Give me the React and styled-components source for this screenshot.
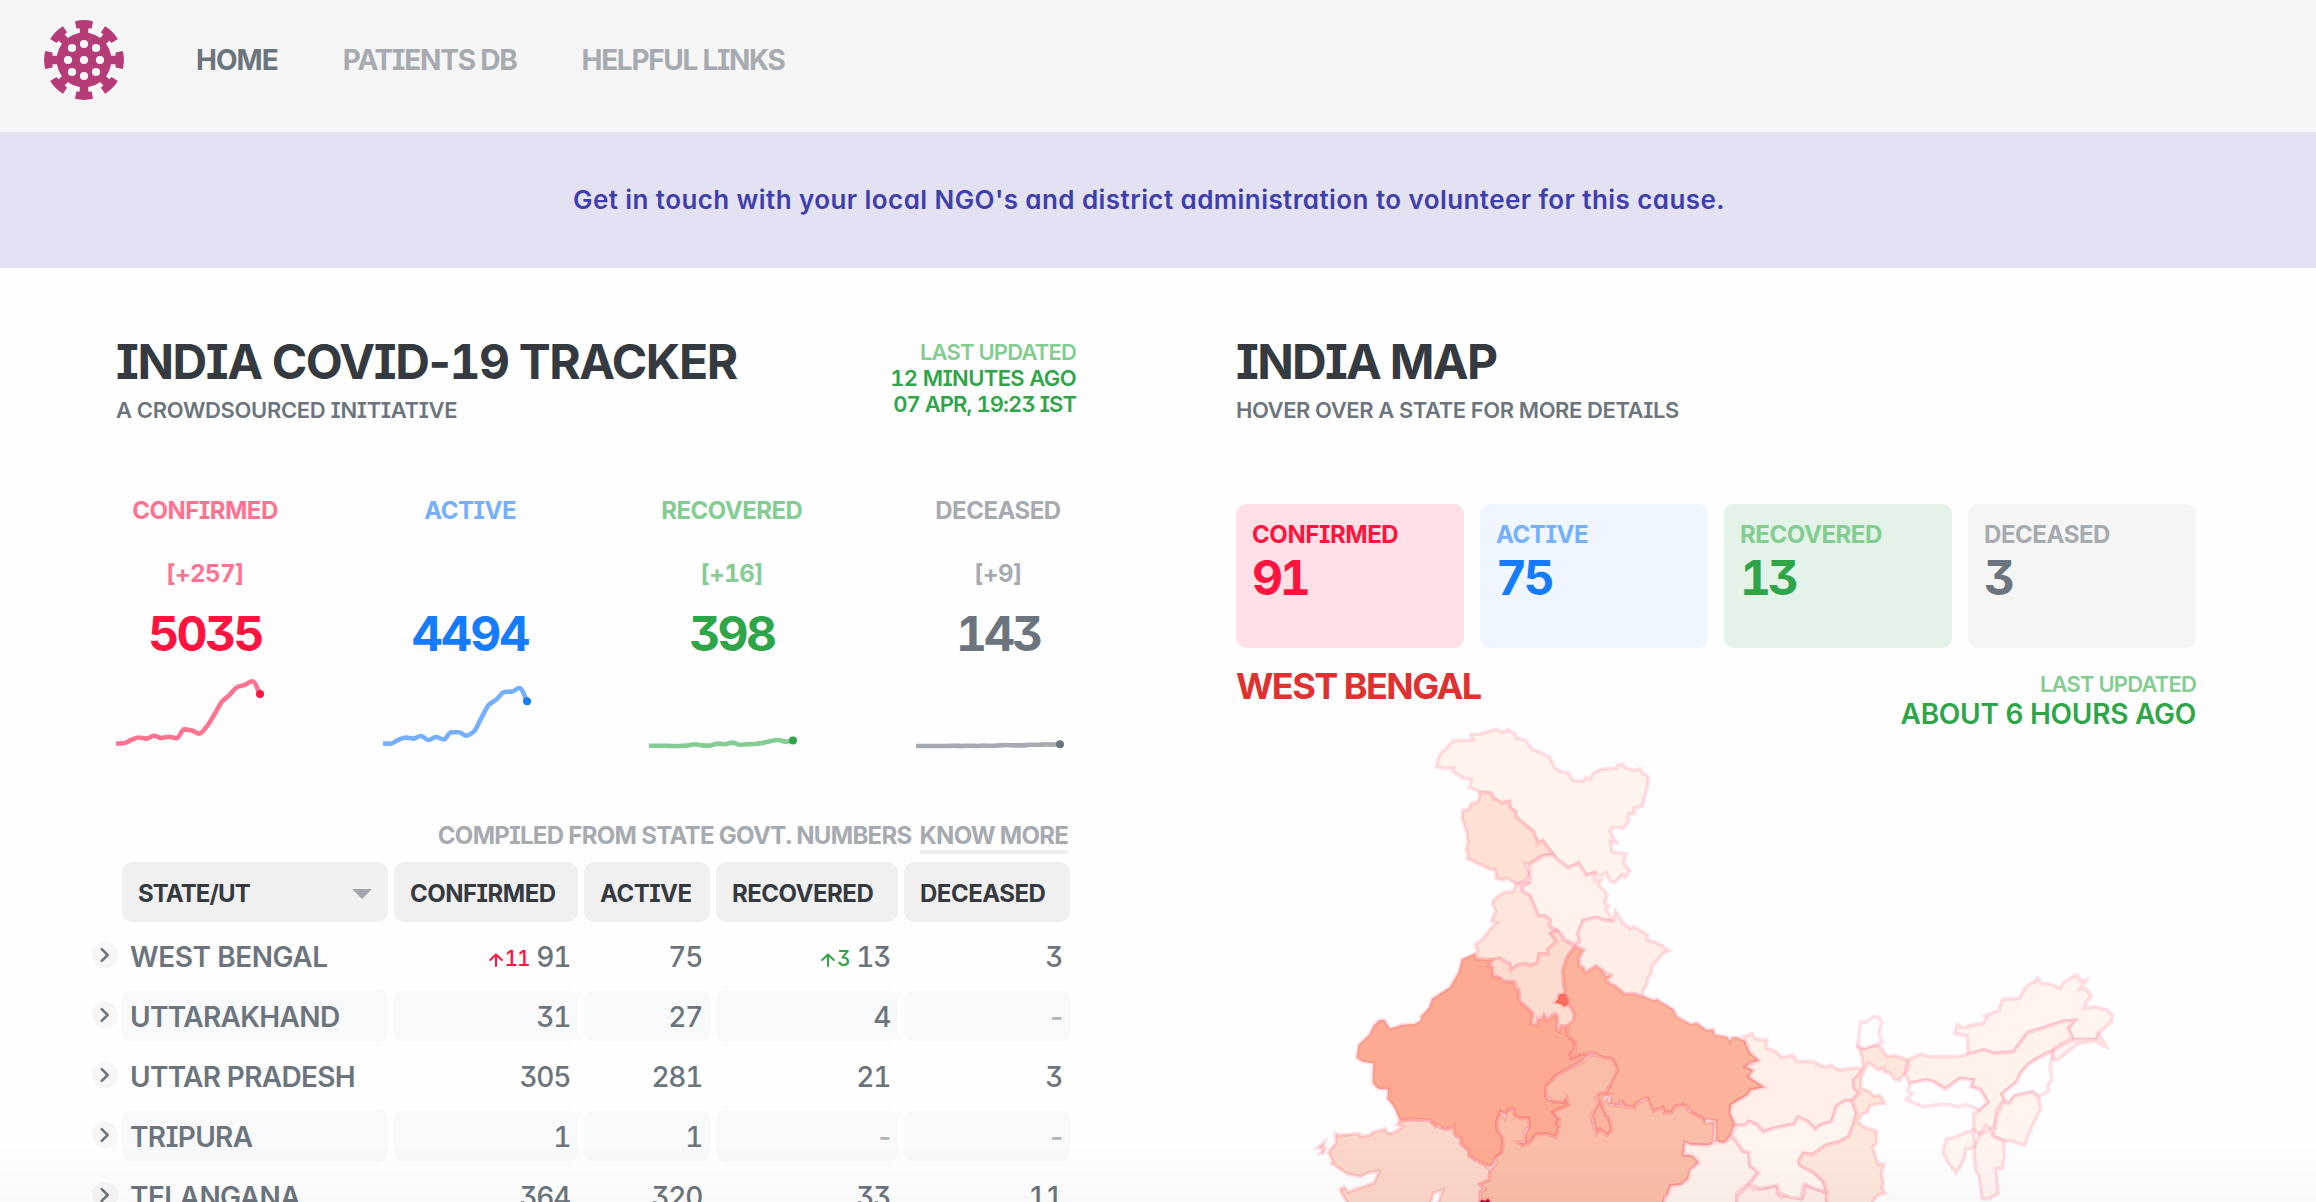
import React from 'react';
import styled, { createGlobalStyle } from 'styled-components';

const tone = {
  red: { soft: '#ff7390', strong: '#ff133f', tint: '#ffe0e6' },
  blue: { soft: '#74b0ff', strong: '#157cff', tint: '#eff6ff' },
  green: { soft: '#83cc92', strong: '#2fa54a', tint: '#e4f3e8' },
  grey: { soft: '#a5abb0', strong: '#6c757d', tint: '#f5f5f6' },
};

const GlobalStyle = createGlobalStyle`
  *, *::before, *::after { box-sizing: border-box; }
  body {
    margin: 0;
    background: #fefefe;
    font-family: Inter, "Liberation Sans", sans-serif;
    font-feature-settings: 'cv08', 'cv09', 'cv11';
  }
`;

const Page = styled.div`
  height: 100vh;
  overflow: hidden;
  display: flex;
  flex-direction: column;
`;

const Navbar = styled.nav`
  flex: none;
  height: 132px;
  background: #f6f6f6;
  display: flex;
  align-items: center;
  padding: 0 43px 12px;
`;

const Logo = styled.svg`
  width: 82px;
  height: 82px;
  flex: none;
  margin-right: 71px;
`;

const NavLinks = styled.div`
  display: flex;
  gap: 65px;
`;

const NavLink = styled.a`
  font-size: 28px;
  font-weight: 700;
  line-height: 35px;
  white-space: nowrap;
  letter-spacing: ${(p) => p.$ls}em;
  color: ${(p) => (p.$active ? '#6c757d' : '#a5abb0')};
`;

const Banner = styled.div`
  flex: none;
  height: 136px;
  background: #e3e2f3;
  color: #3f3eae;
  display: flex;
  align-items: center;
  justify-content: center;
  padding: 0 18px 2px 0;
  font-size: 26px;
  font-weight: 600;
  letter-spacing: 0.0162em;
`;

const Content = styled.main`
  display: flex;
  gap: 160px;
  padding: 65px 0 0 116px;
`;

const Column = styled.section`
  width: 960px;
  flex: none;
  display: flex;
  flex-direction: column;
`;

const ColumnHeader = styled.header`
  display: flex;
  justify-content: space-between;
  height: 91px;
`;

const Title = styled.h1`
  margin: 0;
  color: #343a40;
  font-size: 48px;
  font-weight: 700;
  line-height: 57px;
  letter-spacing: ${(p) => p.$ls}em;
  white-space: nowrap;
`;

const Digits = styled.span`
  font-feature-settings: 'cv09', 'tnum';
`;

const Subtitle = styled.div`
  margin-top: 6px;
  color: #6c757d;
  font-size: 22px;
  font-weight: 600;
  line-height: 29px;
  letter-spacing: ${(p) => p.$ls}em;
  white-space: nowrap;
`;

const Updated = styled.div`
  display: flex;
  flex-direction: column;
  align-items: flex-end;
  padding-top: 6px;
`;

const UpdatedLine = styled.div`
  font-size: ${(p) => p.$size || 22}px;
  line-height: ${(p) => p.$lh || 26}px;
  font-weight: 600;
  letter-spacing: ${(p) => p.$ls}em;
  font-feature-settings: ${(p) => (p.$digits ? "'cv08', 'cv09', 'tnum'" : "'cv08'")};
  color: ${(p) => (p.$soft ? tone.green.soft : tone.green.strong)};
  white-space: nowrap;
`;

const Stats = styled.div`
  display: grid;
  grid-template-columns: repeat(4, 160px);
  justify-content: space-between;
  margin-top: 71.5px;
`;

const Stat = styled.div`
  width: ${(p) => p.$width}px;
  display: flex;
  flex-direction: column;
  align-items: center;
  font-weight: 700;
`;

const StatLabel = styled.div`
  font-size: 24px;
  line-height: 30px;
  letter-spacing: -0.021em;
  color: ${(p) => tone[p.$tone].soft};
`;

const StatDelta = styled.div`
  height: 30px;
  margin-top: 33.5px;
  font-size: 24px;
  line-height: 30px;
  letter-spacing: -0.02em;
  font-feature-settings: 'cv09', 'tnum';
  color: ${(p) => tone[p.$tone].soft};
`;

const StatValue = styled.div`
  margin-top: 17px;
  font-size: 48px;
  line-height: 56px;
  letter-spacing: ${(p) => p.$ls}em;
  font-feature-settings: 'cv09', 'tnum';
  color: ${(p) => tone[p.$tone].strong};
`;

const Spark = styled.svg`
  display: block;
  align-self: flex-start;
  width: 160px;
  height: 96px;
  margin-top: 2px;
  overflow: visible;
`;

const Compiled = styled.div`
  display: flex;
  justify-content: flex-end;
  gap: 8px;
  margin-top: 62px;
  padding-right: 8px;
  height: 40px;
  font-size: 24px;
  font-weight: 700;
  line-height: 28px;
  letter-spacing: -0.0288em;
  color: #a5abb0;
`;

const KnowMore = styled.a`
  height: 32px;
  border-bottom: 4px solid #ebedee;
  letter-spacing: -0.0317em;
`;

const Table = styled.div`
  display: flex;
  flex-direction: column;
  gap: 8px;
  margin-left: -24px;
`;

const Row = styled.div`
  display: grid;
  grid-template-columns: 30px 266px 190px 132px 188px 172px;
  height: ${(p) => p.$height || 52}px;
`;

const HeadCell = styled.div`
  display: flex;
  align-items: center;
  justify-content: space-between;
  padding: 3px 16px 0;
  margin-left: ${(p) => (p.$first ? 0 : 6)}px;
  border-radius: 10px;
  background: #f0f0f0;
  color: #343a40;
  font-size: 24px;
  font-weight: 700;
  letter-spacing: ${(p) => p.$ls || -0.021}em;
`;

const SortMark = styled.svg`
  width: 20px;
  height: 10px;
`;

const Cell = styled.div`
  display: flex;
  align-items: center;
  justify-content: ${(p) => (p.$name ? 'flex-start' : 'flex-end')};
  padding: 1px 8px 0;
  margin-left: ${(p) => (p.$name ? 0 : 6)}px;
  border-radius: 10px;
  background: ${(p) => (p.$shaded ? '#f8f9fb' : 'transparent')};
  color: ${(p) => (p.$muted ? '#b0b5b9' : '#6c757d')};
  font-size: 28px;
  font-weight: ${(p) => (p.$name ? 600 : 500)};
  line-height: 34px;
  white-space: nowrap;
  letter-spacing: ${(p) => (p.$name ? p.$ls : -0.046)}em;
  font-feature-settings: ${(p) => (p.$name ? "'cv08'" : p.$muted ? 'normal' : "'cv09', 'tnum'")};
`;

const Increase = styled.span`
  display: flex;
  align-items: flex-end;
  gap: 2px;
  margin: 4px 7px 0 0;
  font-size: 21px;
  line-height: 26px;
  letter-spacing: -0.06em;
  color: ${(p) => tone[p.$tone].strong};
`;

const Arrow = styled.svg`
  width: 14px;
  height: 14px;
  margin-bottom: 5px;
`;

const Expand = styled.button`
  align-self: center;
  width: 26px;
  height: 26px;
  padding: 0;
  border: 0;
  border-radius: 50%;
  background: #f6f6f6;
  display: flex;
  align-items: center;
  justify-content: center;
  margin-top: -2px;
`;

const Chevron = styled.svg`
  width: 22px;
  height: 22px;
  margin-left: -2px;
`;

const Cards = styled.div`
  display: grid;
  grid-template-columns: repeat(4, 228px);
  gap: 16px;
  margin-top: 80px;
`;

const Card = styled.div`
  height: 144px;
  padding: 15.5px 16px;
  border-radius: 10px;
  background: ${(p) => tone[p.$tone].tint};
  font-weight: 700;
`;

const CardLabel = styled.div`
  font-size: 24px;
  line-height: 30px;
  letter-spacing: -0.018em;
  color: ${(p) => (p.$bright ? tone[p.$tone].strong : tone[p.$tone].soft)};
`;

const CardValue = styled.div`
  font-size: 48px;
  line-height: 56px;
  letter-spacing: -0.07em;
  font-feature-settings: 'cv09', 'tnum';
  color: ${(p) => tone[p.$tone].strong};
`;

const MapHeader = styled.div`
  display: flex;
  justify-content: space-between;
  height: 81px;
  padding-top: 22px;
`;

const Region = styled.h2`
  margin: -6px 0 0;
  color: #e03131;
  font-size: 36px;
  font-weight: 700;
  line-height: 44px;
  letter-spacing: -0.0427em;
`;

const MapUpdated = styled.div`
  display: flex;
  flex-direction: column;
  align-items: flex-end;
`;

const IndiaMap = styled.svg`
  display: block;
  width: 960px;
  height: 473px;
  overflow: visible;
`;

const BottomFade = styled.div`
  position: fixed;
  left: 0;
  right: 0;
  bottom: 0;
  height: 60px;
  pointer-events: none;
  background: linear-gradient(rgba(0, 0, 0, 0), rgba(0, 0, 0, 0.018));
`;

/* Turns a list of heights into a smooth path with evenly spaced points. */
function smoothPath(ys, step) {
  let d = `M0 ${ys[0]}`;
  const slope = (i) => {
    if (i === 0 || i === ys.length - 1) return 0;
    const a = ys[i] - ys[i - 1];
    const b = ys[i + 1] - ys[i];
    return a * b <= 0 ? 0 : (2 * a * b) / (a + b);
  };
  for (let i = 1; i < ys.length; i += 1) {
    const x0 = (i - 1) * step;
    const x1 = i * step;
    const y0 = ys[i - 1];
    const y1 = ys[i];
    const m1 = i === ys.length - 1 ? (y1 - y0) * 1.2 : slope(i);
    d += `C${x0 + step / 3} ${y0 + slope(i - 1) / 3} ${x1 - step / 3} ${y1 - m1 / 3} ${x1} ${y1}`;
  }
  return d;
}

function Sparkline({ color, values }) {
  const step = 144 / (values.length - 1);
  return (
    <Spark viewBox="0 0 160 96">
      <path d={smoothPath(values, step)} fill="none" stroke={tone[color].soft} strokeWidth="4.6" strokeLinejoin="round" />
      <circle cx="144" cy={values[values.length - 1]} r="4" fill={tone[color].strong} />
    </Spark>
  );
}

const stats = [
  { label: 'CONFIRMED', delta: '[+257]', value: '5035', color: 'red', width: 178, ls: -0.055,
    trend: [79.5, 79.3, 76, 73.5, 74.6, 71.7, 74, 72.7, 74.2, 65.4, 66.5, 69.6, 62.3, 50.2, 37.4, 30.8, 23, 20.8, 17.2, 30] },
  { label: 'ACTIVE', delta: '', value: '4494', color: 'blue', width: 175, ls: -0.038,
    trend: [79.5, 79.7, 76, 73.6, 74.6, 72, 76, 73, 75.5, 68.3, 68.3, 71.6, 67.5, 53.5, 40.7, 35.3, 28, 27.6, 24, 37.3] },
  { label: 'RECOVERED', delta: '[+16]', value: '398', color: 'green', width: 165, ls: -0.055,
    trend: [81.8, 81.7, 81.8, 82, 82, 81.6, 80.2, 81.4, 81.6, 79.6, 80.2, 78.6, 80.8, 80.2, 80, 79, 77.2, 76, 77.6, 76.6] },
  { label: 'DECEASED', delta: '[+9]', value: '143', color: 'grey', width: 164, ls: -0.062,
    trend: [82, 82, 82, 82, 82, 81.8, 82, 81.8, 82, 81.6, 81.8, 81.4, 81, 81.4, 81.4, 80.8, 80.8, 80.4, 80.6, 80.2] },
];

const headings = [
  { label: 'STATE/UT', ls: -0.037 },
  { label: 'CONFIRMED' },
  { label: 'ACTIVE' },
  { label: 'RECOVERED' },
  { label: 'DECEASED' },
];

const rows = [
  { name: 'WEST BENGAL', ls: -0.015, cells: ['91', '75', '13', '3'], up: { 0: ['11', 'red'], 2: ['3', 'green'] } },
  { name: 'UTTARAKHAND', ls: -0.023, cells: ['31', '27', '4', '-'] },
  { name: 'UTTAR PRADESH', ls: -0.024, cells: ['305', '281', '21', '3'] },
  { name: 'TRIPURA', ls: -0.024, cells: ['1', '1', '-', '-'] },
  { name: 'TELANGANA', ls: -0.02, cells: ['364', '320', '33', '11'] },
];

const cards = [
  { label: 'CONFIRMED', value: '91', color: 'red', bright: true },
  { label: 'ACTIVE', value: '75', color: 'blue' },
  { label: 'RECOVERED', value: '13', color: 'green' },
  { label: 'DECEASED', value: '3', color: 'grey' },
];

/* State outlines, grouped by the offset that their points are measured from. */
const regions = [
  { dx: 0, dy: 0, shapes: [
    ['#fef3ed', '410,140 418,106 460,62 520,60 512,44 540,42 590,28 606,38 624,30 645,40 648,54 676,60 695,86 748,110 765,144 785,156 804,158 820,182 850,184 856,172 868,178 882,158 905,148 950,144 952,136 968,132 974,142 1000,152 1020,146 1028,160 1042,168 1046,184 1026,258 1000,266 1004,280 986,280 986,304 970,324 938,322 930,334 950,368 932,364 936,396 978,402 970,430 990,452 976,472 966,464 944,488 930,484 918,458 900,468 884,458 858,466 836,430 804,444 770,418 758,400 728,362 714,370 700,334 648,292 646,276 630,262 628,244 606,250 580,234 572,218 540,216 508,202 514,178 488,174 458,154 460,142 436,146'],
    ['#fee0d5', '540,218 572,220 580,234 606,250 628,244 630,262 646,276 648,292 700,334 714,370 728,362 758,404 730,406 700,424 690,434 676,430 690,462 678,482 650,492 618,474 612,480 588,476 586,450 566,446 502,416 504,400 498,392 504,368 500,338 486,292 488,272 504,268 514,252 536,242'],
    ['#fff1eb', '758,404 730,408 704,424 690,434 690,486 664,500 666,514 690,528 714,588 734,588 750,600 748,620 770,632 790,656 820,674 840,664 834,640 850,602 890,592 910,600 940,604 918,568 926,560 914,546 922,524 896,494 904,480 884,482 884,458 858,466 836,430 804,444 770,418'],
    ['#fee6dd', '648,494 690,486 664,500 666,514 690,528 714,588 734,588 750,600 748,620 770,632 752,640 770,664 744,688 746,704 718,702 712,730 690,738 676,732 652,736 632,752 628,730 622,730 598,714 576,720 526,714 534,690 526,680 530,668 546,660 574,624 590,608 574,604 580,588 588,576 578,552 580,540 608,518 640,514'],
    ['#fddcd0', '770,632 786,644 790,660 826,678 802,710 788,750 792,800 798,820 806,850 824,882 820,902 804,918 784,918 776,934 768,926 772,888 764,880 740,902 732,886 728,894 712,892 712,918 692,912 698,880 658,842 656,808 644,786 612,784 598,772 578,768 574,740 566,738 576,720 598,714 622,730 628,730 632,752 652,736 676,732 690,738 712,730 718,702 746,704 744,688 770,664 752,640'],
    ['#ffeee8', '850,602 890,592 910,600 940,604 946,574 972,612 990,626 1002,620 1042,644 1040,660 1070,668 1108,692 1092,698 1054,740 1056,756 1042,776 1040,796 1030,808 1026,830 1004,820 974,822 930,792 918,776 932,766 908,752 888,738 856,758 850,744 836,734 838,712 850,688 826,680 840,664 834,640'],
    ['#fcd6c8', '300,1204 330,1198 390,1202 410,1216 430,1226 448,1226 462,1218 464,1242 484,1258 482,1270 506,1292 508,1308 560,1340 570,1352 568,1380 540,1394 552,1408 540,1416 542,1470 408,1470 428,1410 402,1418 384,1470 154,1470 120,1410 132,1400 144,1416 222,1388 238,1354 206,1358 182,1370 142,1362 94,1330 98,1324 86,1300 90,1288 108,1270 106,1240 116,1246 174,1240 184,1248 210,1246 216,1238 256,1226 262,1240 280,1238 308,1220 290,1214'],
    ['#fcd6c8', '52,1284 74,1266 68,1284'],
    ['#fcd6c8', '60,1300 78,1280 70,1300'],
    ['#fcab92', '526,700 526,716 576,720 566,738 578,742 578,768 598,772 612,784 644,786 648,806 656,808 658,842 698,880 692,912 712,918 714,898 728,896 732,886 740,902 764,882 772,888 770,928 778,934 784,918 800,920 802,944 828,970 824,990 810,1004 816,1014 840,1002 872,1000 850,1020 770,1066 740,1100 738,1128 745,1140 790,1146 800,1134 808,1156 760,1176 780,1200 770,1210 778,1218 768,1250 740,1242 706,1244 694,1264 668,1278 652,1266 676,1270 676,1240 688,1220 684,1194 662,1196 642,1186 640,1168 624,1170 622,1184 602,1176 590,1206 592,1230 604,1240 610,1260 606,1298 586,1314 582,1330 570,1340 560,1338 508,1308 506,1292 482,1270 484,1256 464,1242 462,1216 448,1226 430,1226 414,1214 406,1220 390,1200 330,1198 300,1202 282,1160 262,1136 264,1108 234,1106 218,1088 220,1030 190,1026 170,1014 176,974 208,944 220,918 238,900 254,900 270,926 308,914 344,912 362,902 364,888 388,862 396,836 450,802 476,756 486,718'],
    ['#fbb39b', '826,680 850,690 836,716 838,738 850,744 856,758 888,738 908,752 918,768 936,766 918,778 930,792 944,796 974,822 1004,822 1022,830 1030,828 1064,842 1068,836 1120,868 1132,890 1172,912 1190,908 1220,930 1240,928 1244,944 1282,950 1290,964 1296,952 1310,952 1336,964 1340,976 1350,998 1362,1004 1378,1022 1352,1028 1338,1040 1360,1050 1358,1062 1346,1070 1394,1102 1382,1106 1352,1110 1344,1124 1294,1154 1290,1176 1304,1212 1292,1246 1274,1268 1260,1268 1248,1260 1248,1202 1220,1198 1212,1210 1208,1196 1174,1180 1172,1170 1150,1154 1142,1162 1126,1158 1114,1178 1092,1178 1088,1162 1060,1174 1046,1152 1044,1136 1030,1136 1008,1152 1004,1164 978,1158 968,1162 970,1150 960,1144 958,1156 928,1152 936,1124 912,1130 904,1150 918,1186 926,1190 936,1230 922,1246 900,1228 890,1242 876,1184 896,1150 890,1132 900,1118 920,1116 952,1050 938,1018 906,1012 874,998 840,1002 816,1014 810,1004 826,992 828,970 802,942 802,918 820,902 824,882 806,850 792,800 788,750 802,710'],
    ['#fabda8', '874,1002 906,1012 938,1018 952,1050 920,1116 900,1118 886,1134 896,1150 874,1184 880,1216 890,1242 900,1228 922,1246 936,1230 926,1190 918,1186 904,1150 930,1126 922,1142 932,1156 958,1158 966,1146 978,1160 1004,1164 1008,1152 1044,1136 1060,1174 1088,1162 1092,1178 1114,1178 1126,1158 1150,1154 1172,1176 1208,1196 1214,1210 1244,1204 1240,1262 1228,1276 1170,1274 1154,1268 1150,1304 1176,1306 1196,1328 1178,1348 1164,1378 1142,1394 1112,1398 1102,1424 1094,1428 1086,1470 544,1470 542,1416 556,1408 538,1392 568,1380 570,1350 580,1340 590,1328 586,1314 606,1298 610,1260 592,1230 590,1206 602,1176 614,1194 624,1170 640,1168 642,1186 662,1196 684,1194 688,1220 672,1232 676,1264 652,1266 668,1278 694,1264 706,1244 740,1242 768,1252 778,1218 770,1210 780,1200 760,1176 806,1156 800,1134 790,1146 760,1144 738,1128 736,1100 770,1066 860,1018'],
    ['#f8735c', '776,824 792,820 804,840 802,856 792,860 784,852 764,848 774,838'],
    ['#b3092b', '536,1450 544,1440 556,1442 564,1436 574,1450'],
  ] },
  { dx: 810, dy: 780, shapes: [
    ['#fef0eb', '438,484 464,490 486,470 520,514 536,516 540,556 566,578 536,610 500,640 505,700 276,700 284,660 296,640 302,618 334,614 354,598 360,570 386,548 382,538 366,526 342,524 346,486 360,494 420,496'],
    ['#feede6', '536,616 552,628 572,626 622,616 622,640 634,652 660,642 694,656 706,638 702,612 740,628 770,640 770,700 502,700 500,650'],
    ['#feefe8', '520,170 546,162 556,176 590,180 588,204 616,214 634,232 670,226 680,244 726,244 764,262 780,256 808,270 860,264 878,266 866,288 850,302 854,326 868,340 846,362 826,362 800,378 784,426 752,434 736,448 712,424 684,412 674,432 606,446 580,456 558,430 536,424 526,436 498,436 494,430 480,396 484,374 534,344 542,330 584,322 536,290 550,270 528,260 568,242 540,218 530,192'],
    ['#fef4f0', '498,436 526,436 536,424 558,434 580,456 606,446 674,432 684,412 712,424 736,448 752,434 784,426 800,378 826,362 846,364 860,400 848,440 836,470 806,486 770,494 726,524 700,520 686,542 690,556 730,576 760,604 770,636 740,628 702,612 694,656 660,652 628,640 622,616 572,626 540,612 566,578 540,556 536,516 520,514 494,476 486,466'],
    ['#fde7dd', '864,200 880,204 912,194 930,200 952,230 970,226 1014,240 1006,276 988,302 972,296 958,278 942,276 942,264 924,270 896,248 874,290 872,324 900,336 912,348 930,346 944,370 900,376 892,398 880,400 862,424 880,440 920,454 920,490 908,500 922,546 926,554 942,552 934,580 940,610 936,624 946,640 926,644 910,660 906,700 770,700 770,636 760,604 730,576 690,556 686,542 700,520 726,524 770,494 806,486 836,470 848,440 860,400 846,362 868,340 854,326 850,302 880,266 876,230'],
    ['#fefefe', '872,126 886,128 912,110 926,112 936,128 926,160 938,188 930,190 912,196 884,206 864,198 866,170'],
  ] },
  { dx: 1200, dy: 540, shapes: [
    ['#fff4ef', '764,400 772,374 790,384 816,376 850,370 860,352 854,348 896,332 908,298 956,296 976,264 990,252 1004,246 1012,234 1024,250 1048,252 1080,264 1092,246 1130,224 1144,244 1160,240 1140,268 1158,266 1174,288 1162,302 1152,326 1180,320 1220,330 1238,346 1234,366 1194,400 1190,418 1150,420 1120,418 1104,384 1124,362 1090,364 1030,384 984,398 940,456 880,460 852,450 804,464 802,408'],
    ['#fef2eb', '626,480 662,462 690,470 770,470 804,462 852,450 880,460 940,456 984,398 1030,384 1090,364 1124,362 1104,384 1116,414 1084,432 1056,452 1030,464 988,490 962,520 950,546 906,582 912,600 890,630 886,680 870,688 858,676 840,704 822,690 820,640 832,636 864,606 840,566 812,560 820,540 800,538 780,534 736,566 700,544 676,540 630,550 616,524 626,500'],
    ['#fefefe', '1060,456 1040,462 988,490 962,520 950,546 906,582 926,612 944,588 998,576 1016,590 1046,574 1044,556 1056,538 1050,500'],
    ['#fff7f4', '1060,452 1086,436 1130,418 1190,418 1198,404 1218,440 1200,434 1190,422 1134,430 1072,480 1060,476'],
    ['#fefefe', '630,550 676,540 700,546 736,568 780,536 818,540 812,560 840,570 862,606 838,630 800,614 772,620 740,612 670,620 620,600 636,580 624,574'],
    ['#fff4ee', '926,612 944,588 998,576 1016,596 1022,626 988,696 974,736 930,722 916,724 880,710 890,650 910,606'],
    ['#fff4ef', '840,704 870,688 880,710 910,722 914,770 906,806 888,806 894,880 880,888 868,896 846,896 838,830 826,810 822,740'],
    ['#fff5f1', '820,690 824,740 796,748 794,772 782,796 768,818 746,790 728,756 740,716 760,714 790,700'],
  ] },
];

function VirusLogo() {
  return (
    <Logo viewBox="-41 -41 82 82">
      <g fill="#b63c78">
        <circle r="27.4" />
        {[0, 45, 90, 135, 180, 225, 270, 315].map((angle) => (
          <path key={angle} transform={`rotate(${angle})`} d="M-4.2 -25V-31.5H-7.6L-9 -38.8Q0 -41 9 -38.8L7.6 -31.5H4.2V-25Z" />
        ))}
      </g>
      <g fill="#f6f6f6">
        {[[0, 0], [0, -16], [0, 16], [-16, 0], [16, 0], [-12, -12], [12, -12], [-12, 12], [12, 12]].map(([x, y]) => (
          <circle key={`${x} ${y}`} cx={x} cy={y} r="4.1" />
        ))}
      </g>
    </Logo>
  );
}

function StateRow({ row, shaded }) {
  return (
    <Row>
      <Expand aria-label="Expand">
        <Chevron viewBox="0 0 24 24" fill="none" stroke="#6c757d" strokeWidth="2.8" strokeLinecap="round" strokeLinejoin="round">
          <path d="M9.5 5.5L16 12L9.5 18.5" />
        </Chevron>
      </Expand>
      <Cell $name $ls={row.ls} $shaded={shaded}>{row.name}</Cell>
      {row.cells.map((value, i) => {
        const up = row.up && row.up[i];
        return (
          <Cell key={i} $shaded={shaded} $muted={value === '-'}>
            {up && (
              <Increase $tone={up[1]}>
                <Arrow viewBox="0 0 14 14" fill="none" stroke="currentColor" strokeWidth="2" strokeLinecap="round" strokeLinejoin="round">
                  <path d="M7 13V1.5M1.2 7L7 1.5L12.8 7" />
                </Arrow>
                {up[0]}
              </Increase>
            )}
            {value}
          </Cell>
        );
      })}
    </Row>
  );
}

export default function App() {
  return (
    <Page>
      <GlobalStyle />
      <Navbar>
        <VirusLogo />
        <NavLinks>
          <NavLink $active $ls={-0.034}>HOME</NavLink>
          <NavLink $ls={-0.0431}>PATIENTS DB</NavLink>
          <NavLink $ls={-0.0465}>HELPFUL LINKS</NavLink>
        </NavLinks>
      </Navbar>
      <Banner>Get in touch with your local NGO's and district administration to volunteer for this cause.</Banner>
      <Content>
        <Column>
          <ColumnHeader>
            <div>
              <Title $ls={-0.0297}>INDIA COVID-<Digits>19</Digits> TRACKER</Title>
              <Subtitle $ls={-0.0156}>A CROWDSOURCED INITIATIVE</Subtitle>
            </div>
            <Updated>
              <UpdatedLine $soft $ls={-0.0368}>LAST UPDATED</UpdatedLine>
              <UpdatedLine $digits $ls={-0.028}>12 MINUTES AGO</UpdatedLine>
              <UpdatedLine $digits $ls={-0.042}>07 APR, 19:23 IST</UpdatedLine>
            </Updated>
          </ColumnHeader>
          <Stats>
            {stats.map((s) => (
              <div key={s.label}>
                <Stat $width={s.width}>
                  <StatLabel $tone={s.color}>{s.label}</StatLabel>
                  <StatDelta $tone={s.color}>{s.delta}</StatDelta>
                  <StatValue $tone={s.color} $ls={s.ls}>{s.value}</StatValue>
                </Stat>
                <Sparkline color={s.color} values={s.trend} />
              </div>
            ))}
          </Stats>
          <Compiled>
            <span>COMPILED FROM STATE GOVT. NUMBERS</span>
            <KnowMore>KNOW MORE</KnowMore>
          </Compiled>
          <Table>
            <Row $height={60}>
              <span />
              {headings.map((h, i) => (
                <HeadCell key={h.label} $first={i === 0} $ls={h.ls}>
                  {h.label}
                  {i === 0 && (
                    <SortMark viewBox="0 0 20 10"><path d="M0 0H20L10 10Z" fill="#a0a6ab" /></SortMark>
                  )}
                </HeadCell>
              ))}
            </Row>
            {rows.map((row, i) => (
              <StateRow key={row.name} row={row} shaded={i % 2 === 1} />
            ))}
          </Table>
        </Column>
        <Column>
          <ColumnHeader>
            <div>
              <Title $ls={-0.036}>INDIA MAP</Title>
              <Subtitle $ls={-0.0195}>HOVER OVER A STATE FOR MORE DETAILS</Subtitle>
            </div>
          </ColumnHeader>
          <Cards>
            {cards.map((c) => (
              <Card key={c.label} $tone={c.color}>
                <CardLabel $tone={c.color} $bright={c.bright}>{c.label}</CardLabel>
                <CardValue $tone={c.color}>{c.value}</CardValue>
              </Card>
            ))}
          </Cards>
          <MapHeader>
            <Region>WEST BENGAL</Region>
            <MapUpdated>
              <UpdatedLine $soft $lh={28} $ls={-0.0368}>LAST UPDATED</UpdatedLine>
              <UpdatedLine $size={28} $lh={33} $ls={-0.009}>ABOUT 6 HOURS AGO</UpdatedLine>
            </MapUpdated>
          </MapHeader>
          <IndiaMap viewBox="-192 27 2880 1419">
            {regions.map((group) => (
              <g key={group.dx} transform={`translate(${group.dx} ${group.dy})`} stroke="#ff073a" strokeOpacity="0.12" strokeWidth="11">
                {group.shapes.map(([fill, points]) => (
                  <polygon key={points} points={points} fill={fill} />
                ))}
              </g>
            ))}
          </IndiaMap>
        </Column>
      </Content>
      <BottomFade />
    </Page>
  );
}
